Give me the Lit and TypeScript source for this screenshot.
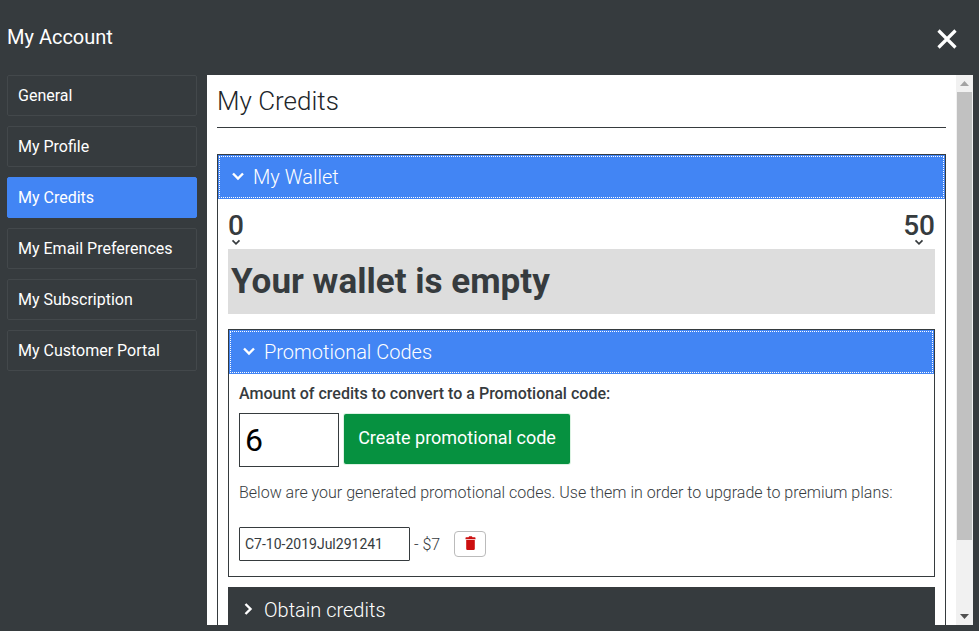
import { LitElement, html, css, svg } from "lit";
import { customElement } from "lit/decorators.js";

const chevDown = svg`<path d="M2 4.5 L7 9.5 L12 4.5" fill="none" stroke="currentColor" stroke-width="2.4"/>`;
const chevRight = svg`<path d="M4.5 2 L9.5 7 L4.5 12" fill="none" stroke="currentColor" stroke-width="2.4"/>`;

@customElement("app-root")
export class AppRoot extends LitElement {
  static styles = css`
    :host { display: block; width: 979px; height: 631px; background: #363b3e; overflow: hidden; font-family: Roboto, "Liberation Sans", sans-serif; color: #363b3e; }
    .top { height: 75px; display: flex; align-items: flex-start; justify-content: space-between; box-sizing: border-box; padding: 25px 20px 0 7px; }
    .title { color: #fff; font-size: 20px; line-height: 24px; }
    .close { width: 24px; height: 24px; margin-top: 2px; display: block; }
    .main { display: flex; align-items: flex-start; padding-left: 7px; gap: 10px; }
    .nav { width: 190px; display: flex; flex-direction: column; gap: 10px; flex: none; }
    .nav div { height: 41px; box-sizing: border-box; border: 1px solid #43484b; border-radius: 2px; padding: 0 10px; display: flex; align-items: center; color: #fff; font-size: 16px; }
    .nav div.on { background: #4285f4; border-color: #4285f4; }
    .panel { width: 766px; height: 550px; background: #fff; display: flex; flex: none; overflow: hidden; }
    .content { width: 749px; box-sizing: border-box; padding: 0 10px; flex: none; }
    .sb { width: 17px; background: #f1f1f1; flex: none; display: flex; flex-direction: column; align-items: center; }
    .sb .arrow { height: 17px; flex: none; display: flex; align-items: center; justify-content: center; }
    .sb .thumb { width: 15px; height: 448px; background: #c1c1c1; }
    .sb .space { flex: 1; }
    h1 { margin: 0; font-size: 26px; font-weight: 300; line-height: 30px; padding: 11px 0 10px; border-bottom: 1px solid #363b3e; height: 53px; box-sizing: border-box; color: #212529; }
    .acc { border: 1px solid #363b3e; }
    .wallet { margin-top: 26px; }
    .head { height: 44px; box-sizing: border-box; background: #4285f4; color: #fff; font-size: 20px; font-weight: 300; display: flex; align-items: center; gap: 8px; padding-left: 13px; outline: 1px dotted #fff; outline-offset: -2px; }
    .head svg { width: 14px; height: 14px; flex: none; position: relative; top: -1px; }
    .wbody { padding: 12px 10px 0; }
    .scale { display: flex; justify-content: space-between; height: 38px; }
    .scale > div { display: flex; flex-direction: column; align-items: center; font-size: 28px; font-weight: 500; line-height: 30px; }
    .scale svg { width: 10px; height: 7px; margin-top: -2px; display: block; }
    .empty { height: 65px; background: #dddddd; font-size: 35.1px; font-weight: 700; line-height: 65px; padding-left: 3px; }
    .promo { margin-top: 15px; }
    .pbody { padding: 11px 10px 14px; height: 202px; box-sizing: border-box; }
    .lbl { font-size: 16.05px; font-weight: 500; line-height: 18px; }
    .row { display: flex; align-items: flex-start; gap: 5px; margin-top: 10px; }
    .num { width: 100px; height: 54px; box-sizing: border-box; border: 1px solid #363b3e; font-size: 32px; color: #000; padding-left: 5px; display: flex; align-items: center; }
    .create { width: 226px; height: 50px; box-sizing: border-box; padding-bottom: 3px; margin-top: 1px; background: #069140; box-shadow: 0 0 0 1px #dcf3e3; color: #fff; font-size: 18px; font-weight: 400; border-radius: 2px; display: flex; align-items: center; justify-content: center; }
    .note { font-size: 16px; font-weight: 300; line-height: 20px; margin-top: 16px; }
    .code { display: flex; align-items: center; margin-top: 24px; font-size: 16px; font-weight: 300; }
    .code .box { width: 171px; height: 34px; box-sizing: border-box; border: 1px solid #363b3e; border-radius: 1px; font-size: 14px; font-weight: 400; padding-left: 5px; display: flex; align-items: center; margin-right: 4px; }
    .trash { width: 32px; height: 26px; box-sizing: border-box; border: 1px solid #bbb; border-radius: 4px; margin-left: 14px; padding-bottom: 2px; display: flex; align-items: center; justify-content: center; }
    .trash svg { width: 11px; height: 14px; display: block; }
    .obtain { margin-top: 10px; height: 46px; background: #363b3e; color: #fff; font-size: 20px; font-weight: 300; display: flex; align-items: center; gap: 9px; padding-left: 13px; }
    .obtain svg { width: 14px; height: 14px; flex: none; position: relative; top: -1px; }
  `;

  render() {
    const items = ["General", "My Profile", "My Credits", "My Email Preferences", "My Subscription", "My Customer Portal"];
    return html`
      <div class="top">
        <div class="title">My Account</div>
        <svg class="close" viewBox="0 0 24 24"><path d="M3.5 3.5 L20.5 20.5 M20.5 3.5 L3.5 20.5" stroke="#fff" stroke-width="3.2" fill="none"/></svg>
      </div>
      <div class="main">
        <div class="nav">
          ${items.map((t) => html`<div class=${t === "My Credits" ? "on" : ""}>${t}</div>`)}
        </div>
        <div class="panel">
          <div class="content">
            <h1>My Credits</h1>
            <div class="acc wallet">
              <div class="head"><svg viewBox="0 0 14 14">${chevDown}</svg>My Wallet</div>
              <div class="wbody">
                <div class="scale">
                  <div>0<svg viewBox="0 0 14 10"><path d="M2 2 L7 7 L12 2" fill="none" stroke="#363b3e" stroke-width="2.4"/></svg></div>
                  <div>50<svg viewBox="0 0 14 10"><path d="M2 2 L7 7 L12 2" fill="none" stroke="#363b3e" stroke-width="2.4"/></svg></div>
                </div>
                <div class="empty">Your wallet is empty</div>
                <div class="acc promo">
                  <div class="head"><svg viewBox="0 0 14 14">${chevDown}</svg>Promotional Codes</div>
                  <div class="pbody">
                    <div class="lbl">Amount of credits to convert to a Promotional code:</div>
                    <div class="row"><div class="num">6</div><div class="create">Create promotional code</div></div>
                    <div class="note">Below are your generated promotional codes. Use them in order to upgrade to premium plans:</div>
                    <div class="code">
                      <div class="box">C7-10-2019Jul291241</div>
                      - $7
                      <div class="trash"><svg viewBox="0 0 11 14"><path fill="#cc0f0f" d="M.5 2 Q.5 1.2 1.3 1.2 H3.6 L4.1 .2 H6.9 L7.4 1.2 H9.7 Q10.5 1.2 10.5 2 V3.2 H.5 Z M1.2 4 H9.8 V12.8 Q9.8 14 8.6 14 H2.4 Q1.2 14 1.2 12.8 Z"/></svg></div>
                    </div>
                  </div>
                </div>
                <div class="obtain"><svg viewBox="0 0 14 14">${chevRight}</svg>Obtain credits</div>
              </div>
            </div>
          </div>
          <div class="sb">
            <div class="arrow"><svg width="9" height="5" viewBox="0 0 9 5"><path d="M4.5 0 L9 5 H0 Z" fill="#a3a3a3"/></svg></div>
            <div class="thumb"></div>
            <div class="space"></div>
            <div class="arrow"><svg width="9" height="5" viewBox="0 0 9 5"><path d="M0 0 H9 L4.5 5 Z" fill="#505050"/></svg></div>
          </div>
        </div>
      </div>
    `;
  }
}
